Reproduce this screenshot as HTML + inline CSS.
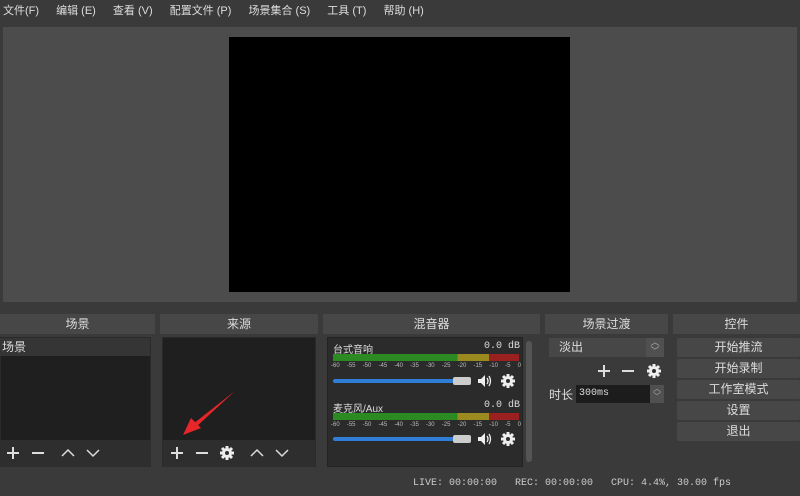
<!DOCTYPE html>
<html><head><meta charset="utf-8"><style>
*{margin:0;padding:0;box-sizing:border-box}
body{width:800px;height:496px;background:#3a3a3a;position:relative;overflow:hidden;font-family:"Liberation Sans","Noto Sans CJK SC",sans-serif;color:#ddd;font-size:12px}
.a{position:absolute}
.menu span{margin-right:14px}
.hd{position:absolute;top:314px;height:20px;background:#474747;text-align:center;line-height:20px;font-size:12px;color:#ddd}
.list{background:#1f1f1f;border:1px solid #2a2a2a}
.tb{background:#2e2e2e}
.btn{position:absolute;left:677px;width:123px;height:19px;background:#474747;border-radius:2px;text-align:center;line-height:19px;font-size:12px}
.mono{font-family:"Liberation Mono","Noto Sans CJK SC",monospace}
.meter{position:absolute;left:333px;width:186px;height:7px;background:linear-gradient(90deg,#2c8a22 0,#2c8a22 67%,#9a8a20 67%,#9a8a20 84%,#9b2020 84%)}
.scale{position:absolute;left:331px;width:190px;font-size:6px;color:#bbb;display:flex;justify-content:space-between}
.sl{position:absolute;left:333px;width:132px;height:4px;background:#2f7fd8;border-radius:2px}
.kn{position:absolute;left:453px;width:18px;height:8px;background:#ccc;border-radius:2px}
svg.i{position:absolute}
</style></head><body>
<svg width="0" height="0" style="position:absolute"><defs>
<g id="plus"><path d="M2 8H14M8 2V14" stroke="#ddd" stroke-width="2"/></g>
<g id="minus"><path d="M2 8H14" stroke="#ddd" stroke-width="2"/></g>
<g id="up"><path d="M2 11L8 5L14 11" stroke="#ddd" stroke-width="1.5" fill="none"/></g>
<g id="down"><path d="M2 5L8 11L14 5" stroke="#ddd" stroke-width="1.5" fill="none"/></g>
<g id="gear"><circle cx="8" cy="8" r="5" fill="#eee"/><path d="M8 1V15M1 8H15M3 3L13 13M13 3L3 13" stroke="#eee" stroke-width="3"/><circle cx="8" cy="8" r="2" fill="#2e2e2e"/></g>
<g id="spk"><path d="M2 6H5L9 2V14L5 10H2Z" fill="#eee"/><path d="M11 5Q13 8 11 11M13 3Q16 8 13 13" stroke="#eee" stroke-width="1.3" fill="none"/></g>
</defs></svg>
<div class="a menu" style="left:3px;top:2px;font-size:11px;color:#ddd;white-space:nowrap"><span>文件(F)</span> <span>编辑 (E)</span> <span>查看 (V)</span> <span>配置文件 (P)</span> <span>场景集合 (S)</span> <span>工具 (T)</span> <span>帮助 (H)</span></div>
<div class="a" style="left:3px;top:27px;width:794px;height:275px;background:#4c4c4c"></div>
<div class="a" style="left:229px;top:37px;width:341px;height:255px;background:#000"></div>

<div class="hd" style="left:0;width:155px">场景</div>
<div class="hd" style="left:160px;width:158px">来源</div>
<div class="hd" style="left:323px;width:217px">混音器</div>
<div class="hd" style="left:545px;width:123px">场景过渡</div>
<div class="hd" style="left:673px;width:127px">控件</div>

<div class="a list" style="left:0;top:337px;width:151px;height:130px"></div>
<div class="a" style="left:0;top:338px;width:150px;height:18px;background:#353535;line-height:18px;padding-left:2px">场景</div>
<div class="a tb" style="left:0;top:440px;width:151px;height:27px"></div>
<svg class="i" style="left:5px;top:445px" width="16" height="16"><use href="#plus"/></svg>
<svg class="i" style="left:30px;top:445px" width="16" height="16"><use href="#minus"/></svg>
<svg class="i" style="left:60px;top:445px" width="16" height="16"><use href="#up"/></svg>
<svg class="i" style="left:85px;top:445px" width="16" height="16"><use href="#down"/></svg>

<div class="a list" style="left:162px;top:337px;width:154px;height:130px"></div>
<div class="a tb" style="left:163px;top:440px;width:152px;height:27px"></div>
<svg class="i" style="left:169px;top:445px" width="16" height="16"><use href="#plus"/></svg>
<svg class="i" style="left:194px;top:445px" width="16" height="16"><use href="#minus"/></svg>
<svg class="i" style="left:219px;top:445px" width="16" height="16"><use href="#gear"/></svg>
<svg class="i" style="left:249px;top:445px" width="16" height="16"><use href="#up"/></svg>
<svg class="i" style="left:274px;top:445px" width="16" height="16"><use href="#down"/></svg>
<svg class="a" style="left:175px;top:388px" width="65" height="50"><path d="M60 3 L18 36 L21 39 Z" fill="#e8262a"/><path d="M8 47 L16 30 L26 40 Z" fill="#e8262a"/></svg>

<div class="a" style="left:327px;top:337px;width:196px;height:130px;background:#2b2b2b;border:1px solid #222"></div>
<div class="a" style="left:526px;top:341px;width:6px;height:121px;background:#555;border-radius:3px"></div>
<div class="a" style="left:333px;top:341px;font-size:10px">台式音响</div>
<div class="a mono" style="left:484px;top:341px;font-size:10px">0.0 dB</div>
<div class="meter" style="top:354px"></div>
<div class="scale" style="top:363px"><span>-60</span><span>-55</span><span>-50</span><span>-45</span><span>-40</span><span>-35</span><span>-30</span><span>-25</span><span>-20</span><span>-15</span><span>-10</span><span>-5</span><span>0</span></div>
<div class="sl" style="top:379px"></div><div class="kn" style="top:377px"></div>
<svg class="i" style="left:476px;top:373px" width="16" height="16"><use href="#spk"/></svg>
<svg class="i" style="left:500px;top:373px" width="16" height="16"><use href="#gear"/></svg>
<div class="a" style="left:333px;top:400px;font-size:10px">麦克风/Aux</div>
<div class="a mono" style="left:484px;top:400px;font-size:10px">0.0 dB</div>
<div class="meter" style="top:413px"></div>
<div class="scale" style="top:422px"><span>-60</span><span>-55</span><span>-50</span><span>-45</span><span>-40</span><span>-35</span><span>-30</span><span>-25</span><span>-20</span><span>-15</span><span>-10</span><span>-5</span><span>0</span></div>
<div class="sl" style="top:437px"></div><div class="kn" style="top:435px"></div>
<svg class="i" style="left:476px;top:431px" width="16" height="16"><use href="#spk"/></svg>
<svg class="i" style="left:500px;top:431px" width="16" height="16"><use href="#gear"/></svg>

<div class="a" style="left:549px;top:338px;width:115px;height:19px;background:#474747;line-height:19px;padding-left:10px">淡出</div>
<div class="a" style="left:646px;top:338px;width:18px;height:19px;background:#505050;font-size:9px;text-align:center;line-height:9px;color:#aaa">︿<br>﹀</div>
<svg class="i" style="left:596px;top:363px" width="16" height="16"><use href="#plus"/></svg>
<svg class="i" style="left:620px;top:363px" width="16" height="16"><use href="#minus"/></svg>
<svg class="i" style="left:646px;top:363px" width="16" height="16"><use href="#gear"/></svg>
<div class="a" style="left:549px;top:386px;font-size:12px">时长</div>
<div class="a mono" style="left:576px;top:385px;width:74px;height:18px;background:#1c1c1c;font-size:10px;line-height:18px;padding-left:3px">300ms</div>
<div class="a" style="left:650px;top:385px;width:14px;height:18px;background:#505050;font-size:8px;text-align:center;line-height:8px;color:#aaa">︿<br>﹀</div>

<div class="btn" style="top:338px">开始推流</div>
<div class="btn" style="top:359px">开始录制</div>
<div class="btn" style="top:380px">工作室模式</div>
<div class="btn" style="top:401px">设置</div>
<div class="btn" style="top:422px">退出</div>

<div class="a mono" style="left:413px;top:478px;font-size:10px;color:#ccc;white-space:pre">LIVE: 00:00:00   REC: 00:00:00   CPU: 4.4%, 30.00 fps</div>
</body></html>
